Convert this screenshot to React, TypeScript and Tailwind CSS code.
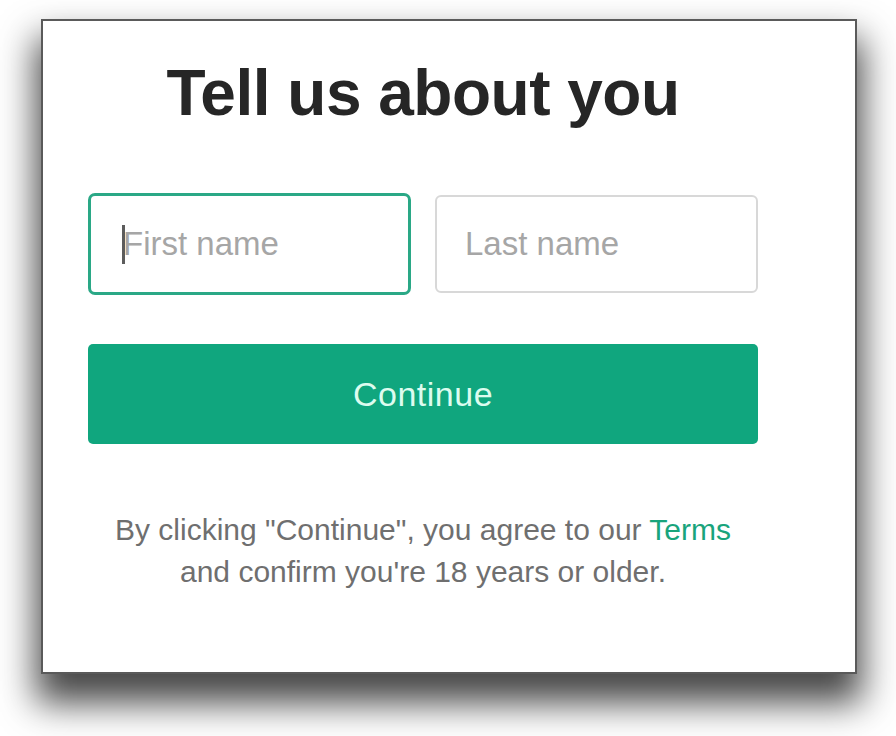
import React from 'react';

const font = { fontFamily: '"Liberation Sans", Arial, sans-serif' };

export default function App() {
  return (
    <div className="w-[896px] h-[736px] bg-white pl-[41px] pt-[19px]" style={font}>
      <div className="w-[816px] h-[655px] border-2 border-[#5a5a5a] bg-white shadow-[0_24px_34px_5px_rgba(0,0,0,0.72)]">
        <div className="w-[670px] ml-[45px] pt-[40px] flex flex-col">
          {/* Heading */}
          <h1 className="text-center text-[64px] leading-[64px] font-bold tracking-[-0.5px] text-[#262626]">
            Tell us about you
          </h1>

          {/* Name fields */}
          <div className="mt-[68px] grid grid-cols-2 gap-[24px] items-center">
            <div className="relative h-[102px] border-[3px] border-[#2aa886] rounded-[7px] bg-white">
              <input
                type="text"
                placeholder="First name"
                className="w-full h-full pl-[32px] pr-4 bg-transparent outline-none text-[33px] text-[#333] placeholder:text-[#a6a6a6]"
                style={font}
              />
              {/* caret */}
              <span className="absolute left-[31px] top-[29px] w-[3px] h-[39px] bg-[#5c5c5c]" />
            </div>
            <div className="h-[98px] border-2 border-[#d8d8d8] rounded-[6px] bg-white">
              <input
                type="text"
                placeholder="Last name"
                className="w-full h-full pl-[28px] pr-4 bg-transparent outline-none text-[33px] text-[#333] placeholder:text-[#a6a6a6]"
                style={font}
              />
            </div>
          </div>

          {/* Continue button */}
          <button className="mt-[49px] h-[100px] w-full rounded-[5px] bg-[#10a67e] text-[34px] tracking-[0.5px] text-[#dcfcef]" style={font}>
            Continue
          </button>

          {/* Footer text */}
          <p className="mt-[65px] text-center text-[30px] leading-[42px] text-[#6f6f6f]">
            By clicking "Continue", you agree to our <span className="text-[#19a47c]">Terms</span>
            <br />
            and confirm you're 18 years or older.
          </p>
        </div>
      </div>
    </div>
  );
}
